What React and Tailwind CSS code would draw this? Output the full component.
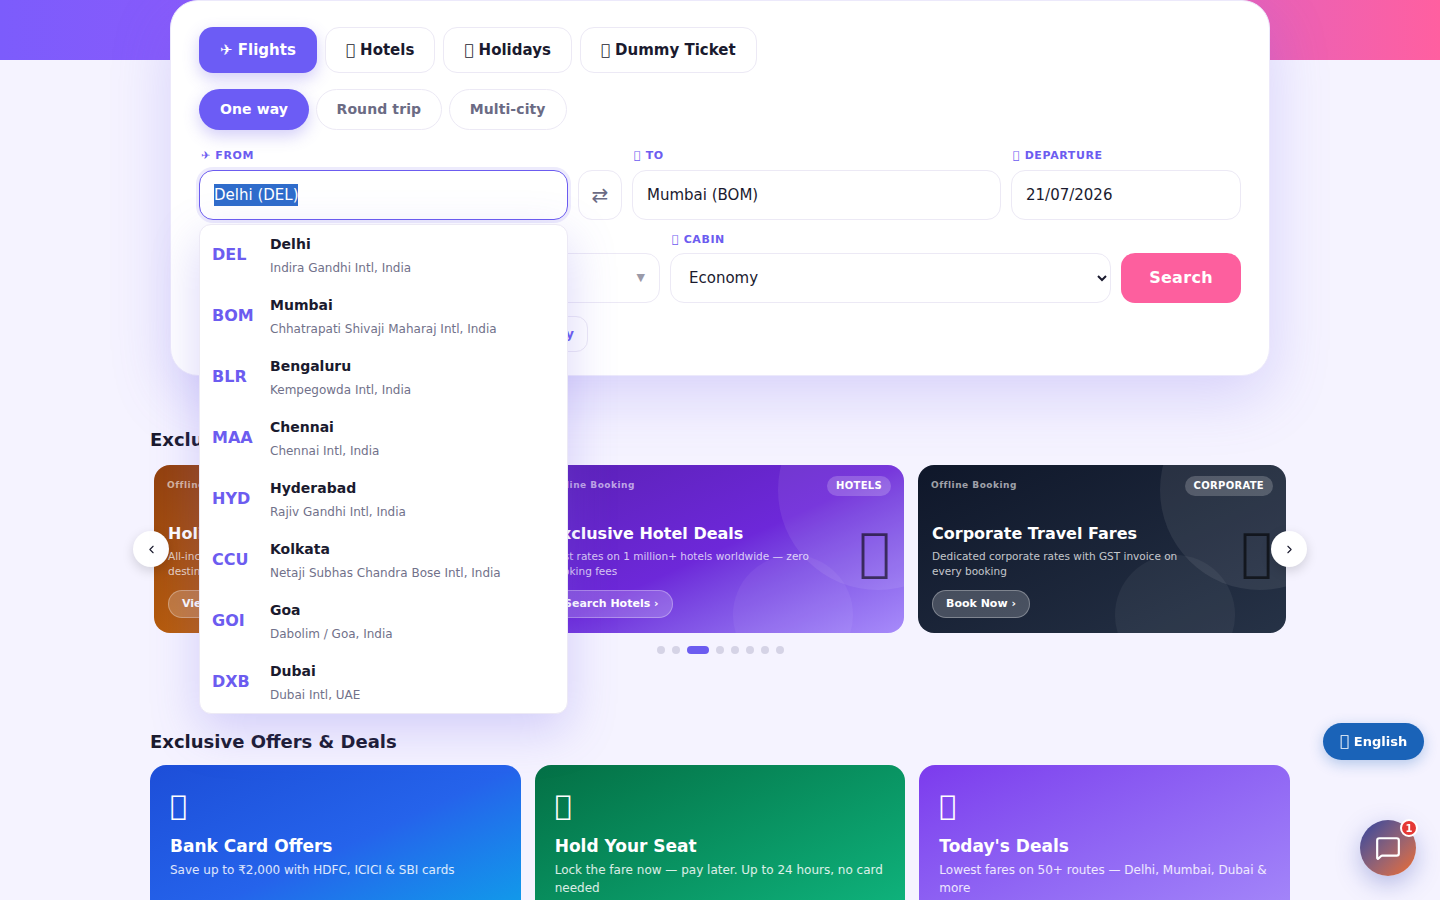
import { ChevronLeft, ChevronRight, MessageSquare } from 'lucide-react';

// the reference's emoji have no glyph there, so they show as empty boxes
const BOX = '\uE000';

const AIRPORTS = [
  { code: 'DEL', city: 'Delhi', name: 'Indira Gandhi Intl, India' },
  { code: 'BOM', city: 'Mumbai', name: 'Chhatrapati Shivaji Maharaj Intl, India' },
  { code: 'BLR', city: 'Bengaluru', name: 'Kempegowda Intl, India' },
  { code: 'MAA', city: 'Chennai', name: 'Chennai Intl, India' },
  { code: 'HYD', city: 'Hyderabad', name: 'Rajiv Gandhi Intl, India' },
  { code: 'CCU', city: 'Kolkata', name: 'Netaji Subhas Chandra Bose Intl, India' },
  { code: 'GOI', city: 'Goa', name: 'Dabolim / Goa, India' },
  { code: 'DXB', city: 'Dubai', name: 'Dubai Intl, UAE' },
];

const SLIDES = [
  {
    tag: 'HOLIDAYS', title: 'Holiday Packages', text: 'All-inclusive tour packages to top holiday destinations worldwide', cta: 'View Packages ›',
    bg: 'bg-gradient-to-br from-[#92400e] to-[#d97706]',
  },
  {
    tag: 'HOTELS', title: 'Exclusive Hotel Deals', text: 'Best rates on 1 million+ hotels worldwide — zero booking fees', cta: 'Search Hotels ›',
    bg: 'bg-gradient-to-br from-[#5b21b6] via-[#6d28d9] to-[#a78bfa]',
  },
  {
    tag: 'CORPORATE', title: 'Corporate Travel Fares', text: 'Dedicated corporate rates with GST invoice on every booking', cta: 'Book Now ›',
    bg: 'bg-gradient-to-br from-[#0f172a] to-[#263246]',
  },
];

const OFFERS = [
  { title: 'Bank Card Offers', text: 'Save up to ₹2,000 with HDFC, ICICI & SBI cards', bg: 'bg-gradient-to-br from-[#1d4ed8] via-[#2563eb] to-[#0ea5e9]' },
  { title: 'Hold Your Seat', text: 'Lock the fare now — pay later. Up to 24 hours, no card needed', bg: 'bg-gradient-to-br from-[#047045] to-[#10b981]' },
  { title: "Today's Deals", text: 'Lowest fares on 50+ routes — Delhi, Mumbai, Dubai & more', bg: 'bg-gradient-to-br from-[#7c3aed] to-[#a78bfa]' },
];

function Label({ icon, children }) {
  return <label className="block text-[11px] leading-[14px] font-bold tracking-[0.6px] text-[#6c5cf0] pl-[2px]">{icon} {children}</label>;
}

function Slide({ slide }) {
  return (
    <div className={`relative h-[168px] w-[368px] shrink-0 overflow-hidden rounded-[16px] ${slide.bg}`}>
      <div className="absolute -right-[74px] -top-[75px] h-[200px] w-[200px] rounded-full bg-white/[0.08]"></div>
      <div className="absolute -bottom-[42px] right-[51px] h-[120px] w-[120px] rounded-full bg-white/5"></div>
      <div className="relative flex h-full flex-col px-[14px] pt-[11px]">
        <div className="flex h-[20px] items-center justify-between">
          <span className="-ml-[1px] text-[9px] font-bold tracking-[0.5px] text-white/60">Offline Booking</span>
          <span className="-mr-[1px] rounded-full bg-white/20 px-[9px] py-[3px] text-[10px] leading-[14px] font-bold tracking-[0.3px] text-white">{slide.tag}</span>
        </div>
        <h3 className="mt-[27px] text-[16px] leading-[22px] font-bold text-white">{slide.title}</h3>
        <p className="mt-[4px] w-[265px] text-[10.5px] leading-[15px] text-white/75">{slide.text}</p>
        <div className="mt-[11px]">
          <span className="inline-block rounded-full border border-white/30 bg-white/20 px-[13px] py-[6px] text-[11px] leading-[14px] font-bold text-white">{slide.cta}</span>
        </div>
        <span className="absolute right-[14px] top-[56px] text-[52px] leading-[62px] text-black/60">{BOX}</span>
      </div>
    </div>
  );
}

export default function App() {
  return (
    <div className="relative h-screen overflow-hidden bg-[#f5f3ff] font-['DejaVu_Sans',sans-serif] text-[#1a1a2e]">
      <div className="h-[60px] bg-gradient-to-r from-[#7c5cfc] via-[#a855f7] to-[#ff5fa0]"></div>

      <div className="mx-auto -mt-[60px] w-[1140px]">
        {/* search card */}
        <div className="relative z-10 mx-auto h-[376px] w-[1100px] rounded-[28px] border border-[#ece9fb] bg-white px-[28px] pt-[26px] shadow-[0_20px_60px_rgba(108,92,231,0.22)]">
          <div className="flex gap-[8px]">
            <button className="h-[46px] rounded-[14px] bg-[#6c5cf5] px-[21px] text-[15px] font-bold text-white shadow-[0_6px_16px_rgba(108,92,231,0.3)]">✈ Flights</button>
            <button className="h-[46px] rounded-[14px] border border-[#ece9f5] bg-white px-[20px] text-[15px] font-bold">{BOX} Hotels</button>
            <button className="h-[46px] rounded-[14px] border border-[#ece9f5] bg-white px-[20px] text-[15px] font-bold">{BOX} Holidays</button>
            <button className="h-[46px] rounded-[14px] border border-[#ece9f5] bg-white px-[20px] text-[15px] font-bold">{BOX} Dummy Ticket</button>
          </div>

          <div className="mt-[16px] flex gap-[6.5px]">
            <button className="h-[41px] rounded-full bg-[#6c5cf5] px-[21px] text-[14px] font-bold tracking-[0.1px] text-white shadow-[0_6px_16px_rgba(108,92,231,0.3)]">One way</button>
            <button className="h-[41px] rounded-full border border-[#ece9f5] bg-white px-[20px] text-[14px] font-bold tracking-[0.1px] text-[#6b6b84]">Round trip</button>
            <button className="h-[41px] rounded-full border border-[#ece9f5] bg-white px-[20px] text-[14px] font-bold tracking-[0.1px] text-[#6b6b84]">Multi-city</button>
          </div>

          <div className="mt-[19px] flex items-end gap-[10px]">
            <div className="w-[369px]">
              <Label icon="✈">FROM</Label>
              <div className="mt-[7px] flex h-[50px] items-center rounded-[14px] border border-[#6c5cf0] bg-white px-[14px] text-[15px] shadow-[0_0_0_3px_rgba(108,92,231,0.12)]">
                <span className="bg-[#2f6ccb] text-white">Delhi (DEL)</span>
              </div>
            </div>
            <button className="flex h-[50px] w-[44px] shrink-0 items-center justify-center rounded-[14px] border border-[#ece9f5] bg-white text-[20px] text-[#6b6b84]">⇄</button>
            <div className="w-[369px]">
              <Label icon={BOX}>TO</Label>
              <div className="mt-[7px] flex h-[50px] items-center rounded-[14px] border border-[#ece9f5] bg-white px-[14px] text-[15px]">Mumbai (BOM)</div>
            </div>
            <div className="w-[230px]">
              <Label icon={BOX}>DEPARTURE</Label>
              <div className="mt-[7px] flex h-[50px] items-center rounded-[14px] border border-[#ece9f5] bg-white px-[14px] text-[15px]">21/07/2026</div>
            </div>
          </div>

          <div className="mt-[13px] flex items-end gap-[10px]">
            <div className="w-[461px]">
              <Label icon={BOX}>TRAVELLERS</Label>
              <div className="mt-[6px] flex h-[50px] items-center justify-between rounded-[14px] border border-[#ece9f5] bg-white pl-[14px] pr-[14px] text-[15px]">
                1 Adult
                <span className="text-[11px] text-[#9a9aa8]">▼</span>
              </div>
            </div>
            <div className="w-[441px]">
              <Label icon={BOX}>CABIN</Label>
              <select defaultValue="Economy" className="mt-[6px] h-[50px] w-full rounded-[14px] border border-[#ece9f5] bg-white pl-[14px] pr-[4px] text-[15px]">
                <option>Economy</option>
                <option>Business</option>
              </select>
            </div>
            <button className="h-[50px] w-[120px] rounded-[14px] bg-[#fd5f9e] text-[16px] font-bold tracking-[0.3px] text-white">Search</button>
          </div>

          <div className="mt-[13px] flex w-[389px] justify-end">
            <span className="flex h-[36px] items-center rounded-[12px] border border-[#ece9f5] bg-white px-[13px] text-[13px] font-bold text-[#6c5cf0]">Non-stop only</span>
          </div>

          {/* airport dropdown */}
          <div className="absolute left-[28px] top-[223px] z-20 h-[490px] w-[369px] overflow-hidden rounded-[12px] border border-[#ece9f5] bg-white shadow-[0_16px_48px_rgba(108,92,231,0.25)]">
            {AIRPORTS.map((a) => (
              <div key={a.code} className="flex h-[61px] items-center px-[12px]">
                <span className="mb-[2px] w-[58px] shrink-0 text-[16px] font-bold text-[#6c5cf0]">{a.code}</span>
                <div>
                  <div className="text-[14px] leading-[20px] font-bold">{a.city}</div>
                  <div className="mt-[5px] text-[12px] leading-[18px] text-[#71718a]">{a.name}</div>
                </div>
              </div>
            ))}
          </div>
        </div>

        {/* offers carousel */}
        <div className="relative">
          <h2 className="mt-[52px] text-[18px] leading-[24px] font-bold">Exclusive Offers</h2>
          <div className="relative mx-[4px] mt-[13px] flex gap-[14px]">
            {SLIDES.map((s) => <Slide key={s.tag} slide={s} />)}
            <button className="absolute -left-[21px] top-[66px] flex h-[36px] w-[36px] items-center justify-center rounded-full bg-white shadow-[0_4px_12px_rgba(0,0,0,0.15)]"><ChevronLeft size={13} strokeWidth={2} /></button>
            <button className="absolute -right-[21px] top-[66px] flex h-[36px] w-[36px] items-center justify-center rounded-full bg-white shadow-[0_4px_12px_rgba(0,0,0,0.15)]"><ChevronRight size={13} strokeWidth={2} /></button>
          </div>
          <div className="mt-[13px] flex items-center justify-center gap-[7px]">
            <span className="h-[8px] w-[8px] rounded-full bg-[#d5d3e6]"></span>
            <span className="h-[8px] w-[8px] rounded-full bg-[#d5d3e6]"></span>
            <span className="h-[8px] w-[22px] rounded-full bg-[#6c5cf0]"></span>
            <span className="h-[8px] w-[8px] rounded-full bg-[#d5d3e6]"></span>
            <span className="h-[8px] w-[8px] rounded-full bg-[#d5d3e6]"></span>
            <span className="h-[8px] w-[8px] rounded-full bg-[#d5d3e6]"></span>
            <span className="h-[8px] w-[8px] rounded-full bg-[#d5d3e6]"></span>
            <span className="h-[8px] w-[8px] rounded-full bg-[#d5d3e6]"></span>
          </div>
        </div>

        {/* offer cards */}
        <h2 className="mt-[76px] text-[18px] leading-[24px] font-bold">Exclusive Offers &amp; Deals</h2>
        <div className="mt-[11px] grid grid-cols-3 gap-[14px]">
          {OFFERS.map((o) => (
            <div key={o.title} className={`h-[170px] rounded-[16px] px-[20px] pt-[20px] text-white ${o.bg}`}>
              <div className="text-[28px] leading-[42px]">{BOX}</div>
              <h3 className="mt-[7px] text-[17px] leading-[24px] font-bold">{o.title}</h3>
              <p className="mt-[3px] text-[12px] leading-[18px] text-white/85">{o.text}</p>
            </div>
          ))}
        </div>
      </div>

      {/* floating buttons */}
      <button className="fixed right-[16px] top-[723px] z-30 flex h-[37px] w-[101px] items-center justify-center rounded-full bg-[#1a63b8] text-[13px] font-bold text-white shadow-[0_4px_14px_rgba(26,99,184,0.3)]"><span className="mr-[5px] text-[15px]">{BOX}</span>English</button>
      <button className="fixed left-[1360px] top-[820px] z-30 flex h-[56px] w-[56px] items-center justify-center rounded-full bg-gradient-to-br from-[#2f3f9e] to-[#f06a12] text-white shadow-[0_8px_24px_rgba(63,81,181,0.35)]">
        <MessageSquare size={26} strokeWidth={2} />
        <span className="absolute -right-[2px] -top-[1px] flex h-[18px] w-[18px] items-center justify-center rounded-full border-2 border-white bg-[#e53935] text-[10px] font-bold text-white">1</span>
      </button>
    </div>
  );
}
